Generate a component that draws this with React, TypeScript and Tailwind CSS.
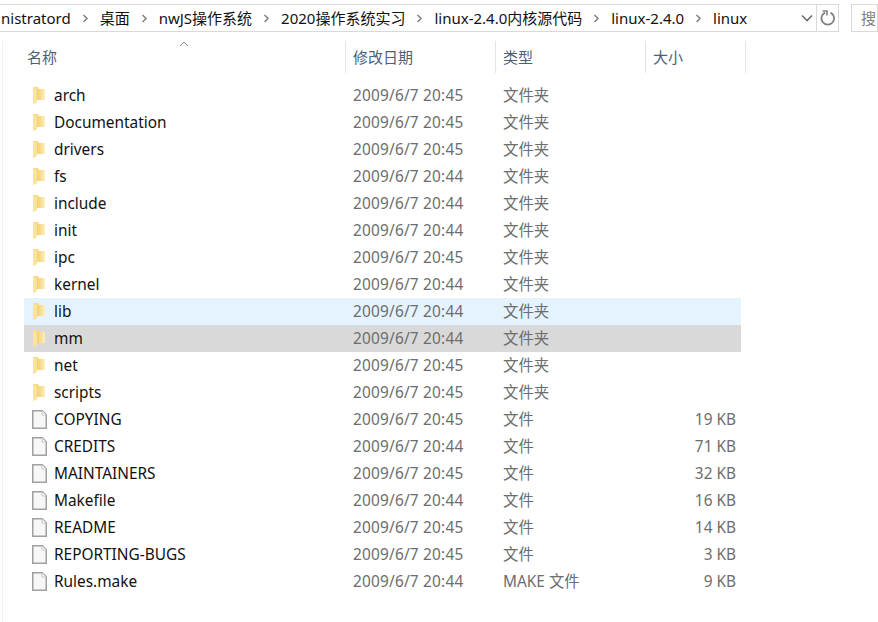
const FONT = "font-['Noto_Sans','Noto_Sans_CJK_SC',sans-serif]";

const folders = [
  ["arch", "20:45"],
  ["Documentation", "20:45"],
  ["drivers", "20:45"],
  ["fs", "20:44"],
  ["include", "20:44"],
  ["init", "20:44"],
  ["ipc", "20:45"],
  ["kernel", "20:44"],
  ["lib", "20:44"],
  ["mm", "20:44"],
  ["net", "20:45"],
  ["scripts", "20:45"],
];

const files = [
  ["COPYING", "20:45", "文件", "19 KB"],
  ["CREDITS", "20:44", "文件", "71 KB"],
  ["MAINTAINERS", "20:45", "文件", "32 KB"],
  ["Makefile", "20:44", "文件", "16 KB"],
  ["README", "20:45", "文件", "14 KB"],
  ["REPORTING-BUGS", "20:45", "文件", "3 KB"],
  ["Rules.make", "20:44", "MAKE 文件", "9 KB"],
];

const crumbs = ["nistratord", "桌面", "nwJS操作系统", "2020操作系统实习", "linux-2.4.0内核源代码", "linux-2.4.0", "linux"];

function FolderIcon() {
  return (
    <svg width="14" height="19" viewBox="0 0 14 19" className="shrink-0">
      <defs>
        <linearGradient id="fold" x1="0" y1="0" x2="1" y2="0">
          <stop offset="0" stopColor="#f3cf6f" />
          <stop offset="1" stopColor="#fdeebc" />
        </linearGradient>
      </defs>
      <path d="M1 1h5l1 2h6v11H5v2l-4 2z" fill="#f6d98a" />
      <path d="M5 3h8v11H5z" fill="url(#fold)" />
      <path d="M1 1.500l4 1.500v13l-4 2z" fill="#fae39f" />
    </svg>
  );
}

function FileIcon() {
  return (
    <svg width="15" height="19" viewBox="0 0 15 19" className="shrink-0">
      <path d="M.75.75h9.500l4 4v13.500H.75z" fill="#f7f7f7" stroke="#a0a0a0" strokeWidth="1.500" />
      <path d="M10 1v4h4" fill="#fff" stroke="#c4c4c4" />
    </svg>
  );
}

function Chevron() {
  return (
    <svg width="7" height="9" viewBox="0 0 7 9" className="shrink-0">
      <path d="M1.500 1l3.500 3.500L1.500 8" fill="none" stroke="#808080" strokeWidth="1.500" />
    </svg>
  );
}

function Row({ name, time, type, size, tone, file }: { name: string; time: string; type: string; size?: string; tone?: string; file?: boolean }) {
  return (
    <div className={`flex h-[27px] w-[717px] items-center ${tone ?? ""}`}>
      <div className="flex w-[329px] items-center pl-[8px]">
        <div className="flex w-[22px] items-center">{file ? <FileIcon /> : <FolderIcon />}</div>
        <span className="text-[15.4px] text-[#111111]">{name}</span>
      </div>
      <span className="w-[150px] text-[15.4px] tracking-[0.2px] text-[#6d6d6d]">2009/6/7 {time}</span>
      <span className="w-[143px] text-[15.4px] text-[#6d6d6d]">{type}</span>
      <span className="w-[90px] text-right text-[15.4px] text-[#6d6d6d]">{size}</span>
    </div>
  );
}

export default function App() {
  return (
    <div className={`${FONT} h-[622px] w-[878px] overflow-hidden bg-white`}>
      <div className="flex h-[41px] items-start pt-[4px]">
        <div className="ml-[-4px] flex h-[28px] w-[843px] items-center border border-[#d9d9d9] bg-white">
          <div className="flex flex-1 items-center gap-[11px] overflow-hidden whitespace-nowrap pl-[4px] text-[15px] text-[#111111]">
            {crumbs.map((c, i) => (
              <div key={c} className="flex items-center gap-[11px]">
                {i > 0 && <Chevron />}
                <span>{c}</span>
              </div>
            ))}
          </div>
          <svg width="12" height="8" viewBox="0 0 12 8" className="mr-[3px] shrink-0">
            <path d="M1 1.500l5 5 5-5" fill="none" stroke="#6f6f6f" strokeWidth="1.600" />
          </svg>
          <div className="flex h-full w-[22px] items-center justify-center border-l border-[#d9d9d9]">
            <svg width="16" height="16" viewBox="0 0 16 16">
              <path d="M5 2.600a6.300 6.300 0 1 0 5.500 0" fill="none" stroke="#808080" strokeWidth="1.800" />
              <path d="M2.500 1h4.500v4.500" fill="none" stroke="#808080" strokeWidth="1.600" />
            </svg>
          </div>
        </div>
        <div className="ml-[12px] flex h-[28px] flex-1 items-center border border-[#d9d9d9] pl-[9px] text-[15px] text-[#808080]">
          <span className="whitespace-nowrap">搜</span>
        </div>
      </div>
      <div className="ml-[2px] h-[581px] border-l border-[#f0f0f0] pl-[21px]">
        <div className="relative flex h-[32px] w-[722px] text-[15px] text-[#4c607a]">
          <svg width="10" height="6" viewBox="0 0 10 6" className="absolute left-[155px] top-0">
            <path d="M1 5l4-4 4 4" fill="none" stroke="#8a8a8a" />
          </svg>
          <div className="flex w-[322px] items-center border-r border-[#e5e5e5] pl-[3px]">名称</div>
          <div className="flex w-[150px] items-center border-r border-[#e5e5e5] pl-[7px]">修改日期</div>
          <div className="flex w-[150px] items-center border-r border-[#e5e5e5] pl-[7px]">类型</div>
          <div className="flex w-[100px] items-center border-r border-[#e5e5e5] pl-[7px]">大小</div>
        </div>
        <div className="mt-[9px]">
          {folders.map(([name, time]) => (
            <Row
              key={name}
              name={name}
              time={time}
              type="文件夹"
              tone={name === "lib" ? "bg-[#e5f3ff]" : name === "mm" ? "bg-[#d9d9d9]" : undefined}
            />
          ))}
          {files.map(([name, time, type, size]) => (
            <Row key={name} name={name} time={time} type={type} size={size} file />
          ))}
        </div>
      </div>
    </div>
  );
}
